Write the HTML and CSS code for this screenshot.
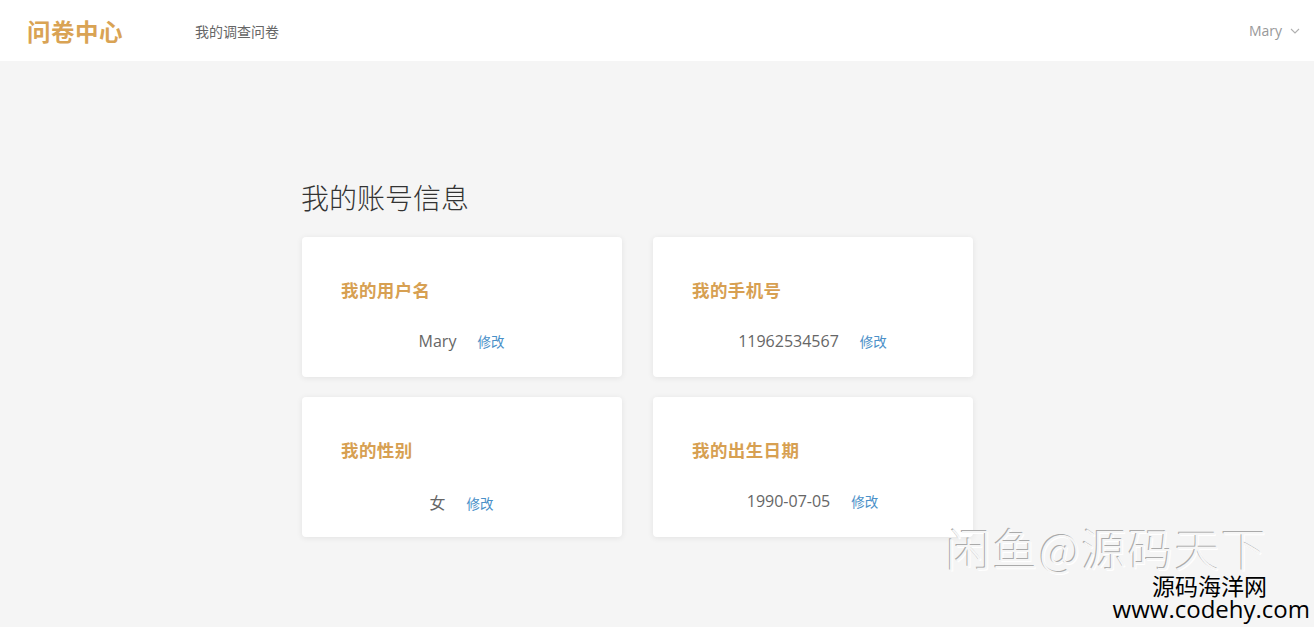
FILE: index.html
```html
<!DOCTYPE html>
<html lang="zh-CN">
<head>
<meta charset="utf-8">
<title>我的账号信息</title>
<link rel="stylesheet" href="styles.css">
</head>
<body>
<header class="topbar">
  <div class="logo">问卷中心</div>
  <nav class="nav"><a class="nav-item">我的调查问卷</a></nav>
  <div class="user">Mary
    <svg class="chev" width="10" height="6" viewBox="0 0 10 6"><path d="M1 1 L5 5 L9 1" fill="none" stroke="#b0b0b0" stroke-width="1.1"/></svg>
  </div>
</header>
<main class="main">
  <div class="container">
    <h1 class="title">我的账号信息</h1>
    <div class="cards">
      <div class="card">
        <div class="card-title">我的用户名</div>
        <div class="card-value"><span class="val">Mary</span><a class="edit">修改</a></div>
      </div>
      <div class="card">
        <div class="card-title">我的手机号</div>
        <div class="card-value"><span class="val">11962534567</span><a class="edit">修改</a></div>
      </div>
      <div class="card">
        <div class="card-title">我的性别</div>
        <div class="card-value"><span class="val">女</span><a class="edit">修改</a></div>
      </div>
      <div class="card">
        <div class="card-title">我的出生日期</div>
        <div class="card-value"><span class="val">1990-07-05</span><a class="edit">修改</a></div>
      </div>
    </div>
  </div>
</main>
<div class="wm-emboss">闲鱼@源码天下</div>
<div class="wm-site"><div class="wm-cn">源码海洋网</div><div class="wm-url">www.codehy.com</div></div>
</body>
</html>
```
FILE: styles.css
```css
* { box-sizing: border-box; }
html, body { margin: 0; padding: 0; }
body {
  background: #f5f5f5;
  font-family: "Noto Sans CJK SC", "Open Sans", sans-serif;
  color: #333;
  height: 627px;
  overflow: hidden;
  position: relative;
}
.topbar {
  height: 61px;
  background: #fff;
  display: flex;
  align-items: center;
  padding: 0 14px 0 27px;
}
.logo {
  font-size: 23.5px;
  font-weight: 700;
  color: #d9a354;
  letter-spacing: 0.5px;
  width: 168px;
}
.nav { flex: 1; display: flex; }
.nav-item {
  font-size: 14px;
  color: #666;
}
.user {
  font-family: "Open Sans", "Noto Sans CJK SC", sans-serif;
  font-size: 14px;
  color: #999;
  display: flex;
  align-items: center;
  gap: 8px;
  margin-left: -2px;
}
.main { padding-top: 118px; }
.container {
  width: 710px;
  margin: 0 auto;
}
.title {
  margin: 0 0 22px -1px;
  font-size: 28px;
  font-weight: 300;
  color: #333;
  line-height: 36px;
}
.cards {
  display: grid;
  grid-template-columns: 320px 320px;
  column-gap: 31px;
  row-gap: 20px;
}
.card {
  height: 140px;
  background: #fff;
  border-radius: 4px;
  box-shadow: 0 1px 6px rgba(0,0,0,0.08);
  padding: 41px 40px 0 39px;
}
.card-title {
  font-size: 17.5px;
  font-weight: 700;
  color: #d7a052;
  line-height: 24px;
  letter-spacing: 0.4px;
}
.card-value {
  margin-top: 28px;
  display: flex;
  justify-content: center;
  align-items: baseline;
  gap: 21px;
}
.val {
  font-family: "Open Sans", "Noto Sans CJK SC", sans-serif;
  font-size: 16px;
  color: #666;
}
.edit {
  font-size: 13.5px;
  color: #4a90c8;
}
.wm-emboss {
  position: absolute;
  left: 946px;
  top: 524px;
  font-size: 45px;
  font-weight: 300;
  color: #f6f6f6;
  letter-spacing: 1.5px;
  line-height: 48px;
  text-shadow: -1px -1px 0 #aaa, 1px 1px 0 #fff;
  white-space: nowrap;
}
.wm-site {
  position: absolute;
  right: 4px;
  top: 573px;
  text-align: right;
  color: #000;
  font-family: "Open Sans", "Noto Sans CJK SC", sans-serif;
  font-size: 24px;
}
.wm-cn {
  margin-right: 43px;
  font-family: "Noto Sans CJK SC", sans-serif;
  font-size: 23px;
  line-height: 24px;
}
.wm-url { line-height: 24px; }
```
